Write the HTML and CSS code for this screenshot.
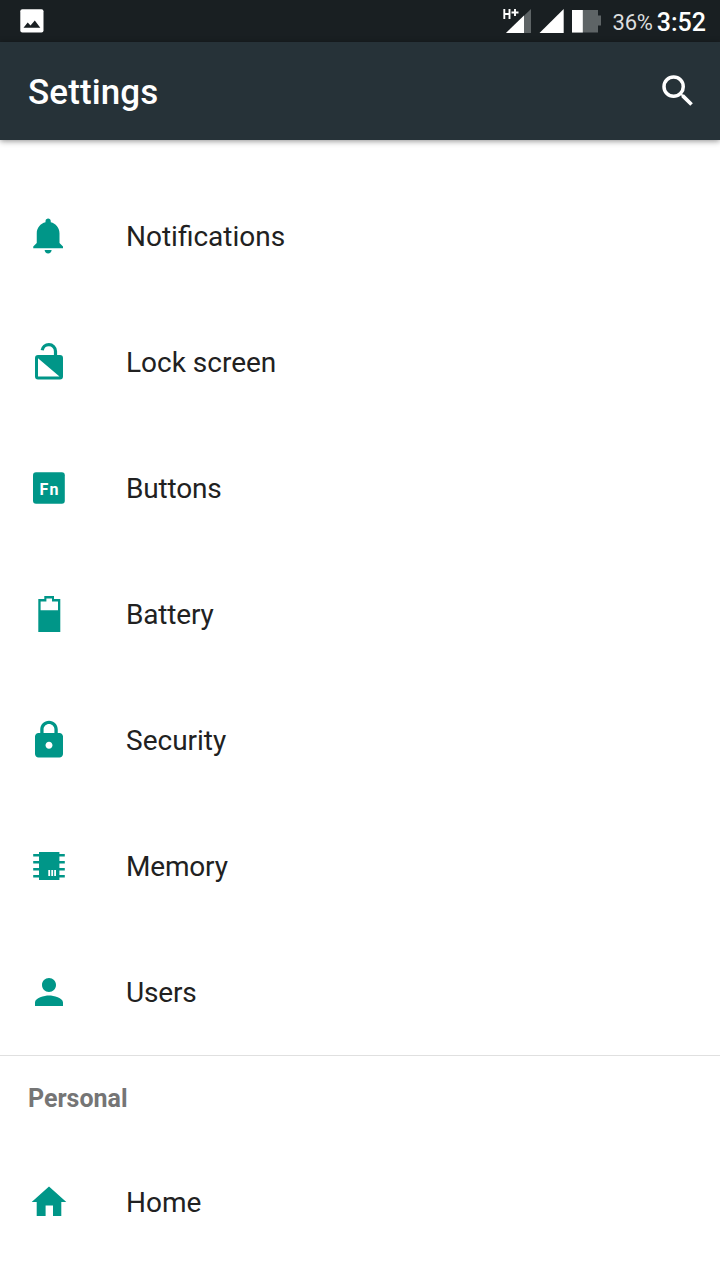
FILE: index.html
```html
<!DOCTYPE html>
<html lang="en">
<head>
<meta charset="utf-8">
<title>Settings</title>
<link rel="stylesheet" href="styles.css">
</head>
<body>
<div class="status-bar">
  <svg class="picture-icon" width="24" height="24" viewBox="0 0 24 24"><rect x=".3" y=".3" width="23.2" height="23.2" rx="2" fill="#fff"/><path d="M3.500 18.800 7.700 13.400l2.800 3.200 4.300-5.200 5.500 7.400z" fill="#191f22"/></svg>
  <div class="status-right">
    <svg class="signals" width="100" height="28" viewBox="0 0 100 28">
      <path d="M5 27 30 3v24z" fill="#5e6466"/>
      <path d="M5 27 23 9.500V27z" fill="#fff"/>
      <path d="M1 1h13v13H1z" fill="#191f22"/>
      <path d="M3.300 3v10M8.500 3v10M3.300 8h5.200M10.500 6.500h7M14 3v7" fill="none" stroke="#fff" stroke-width="1.900"/>
      <path d="M38.500 27 62.700 3v24z" fill="#fff"/>
      <path d="M71 4h26v5.500h3v10H97v7H71z" fill="#5e6466"/>
      <path d="M71 4h10.800v22.500H71z" fill="#fff"/>
    </svg>
    <span class="percent">36%</span>
    <span class="clock">3:52</span>
  </div>
</div>
<header class="app-bar">
  <h1 class="title">Settings</h1>
  <svg class="icon-search" width="42" height="42" viewBox="0 0 24 24"><path fill="#fff" d="M15.500 14h-.79l-.28-.27A6.470 6.470 0 0 0 16 9.500 6.500 6.500 0 1 0 9.500 16c1.610 0 3.090-.59 4.230-1.570l.27.28v.79l5 4.990L20.490 19l-4.990-5zm-6 0a4.500 4.500 0 1 1 0-9 4.500 4.500 0 0 1 0 9z"/></svg>
</header>
<main class="list">
  <div class="row">
    <svg class="icon" viewBox="0 0 24 24"><path d="M11.500 22c1.100 0 2-.9 2-2h-4c0 1.100.9 2 2 2zm6.500-6v-5.500c0-3.070-2.130-5.640-5-6.320V3.500c0-.83-.67-1.500-1.500-1.500S10 2.670 10 3.500v.68c-2.870.68-5 3.250-5 6.320V16l-2 2v1h17v-1l-2-2z"/></svg>
    <span class="label">Notifications</span>
  </div>
  <div class="row">
    <svg class="icon" viewBox="0 0 42 42"><path d="M14.200 9.300C14.700 6 17.400 3.700 20.900 3.700c3.700 0 6.600 2.800 6.600 6.500V15" fill="none" stroke="#009688" stroke-width="3.200"/><path fill-rule="evenodd" d="M10 14h22a3 3 0 0 1 3 3v18.500a3 3 0 0 1-3 3H10a3 3 0 0 1-3-3V17a3 3 0 0 1 3-3zM10 17.200V35.400H31.500z"/></svg>
    <span class="label">Lock screen</span>
  </div>
  <div class="row">
    <svg class="icon" viewBox="0 0 42 42"><rect x="5" y="5.200" width="31.800" height="31.600" rx="3"/><text class="fn" x="21" y="27.600" text-anchor="middle" textLength="19">Fn</text></svg>
    <span class="label label-tight">Buttons</span>
  </div>
  <div class="row">
    <svg class="icon" viewBox="0 0 42 42"><path fill-rule="evenodd" d="M10.300 6H16.300V3H26V6H32.300V39H10.300zM12.600 8.600V17.200H30V8.600H24V5.400H18.400V8.600z"/></svg>
    <span class="label label-tight">Battery</span>
  </div>
  <div class="row">
    <svg class="icon" viewBox="0 0 24 24"><path d="M18 8h-1V6c0-2.760-2.240-5-5-5S7 3.240 7 6v2H6c-1.100 0-2 .9-2 2v10c0 1.100.9 2 2 2h12c1.100 0 2-.9 2-2V10c0-1.100-.9-2-2-2zm-6 9c-1.100 0-2-.9-2-2s.9-2 2-2 2 .9 2 2-.9 2-2 2zm3.100-9H8.900V6c0-1.710 1.390-3.100 3.100-3.100s3.100 1.390 3.100 3.100v2z"/></svg>
    <span class="label">Security</span>
  </div>
  <div class="row">
    <svg class="icon" viewBox="0 0 42 42"><path d="M11 7h20.400v28H11zM5.200 9h31.600v2.400H5.200zM5.200 16h31.600v2.400H5.200zM5.200 23h31.600v2.400H5.200zM5.200 30h31.600v2.400H5.200z"/><path fill="#fff" d="M20.300 25h1.800v6h-1.800zM23.300 25h1.800v6h-1.800zM26.200 25h1.800v6h-1.800z"/></svg>
    <span class="label label-tight">Memory</span>
  </div>
  <div class="row">
    <svg class="icon" viewBox="0 0 24 24"><path d="M12 12c2.210 0 4-1.790 4-4s-1.790-4-4-4-4 1.790-4 4 1.790 4 4 4zm0 2c-2.670 0-8 1.340-8 4v2h16v-2c0-2.660-5.330-4-8-4z"/></svg>
    <span class="label label-tight">Users</span>
  </div>
  <h2 class="section">Personal</h2>
  <div class="row">
    <svg class="icon" viewBox="0 0 42 42"><path d="M21 5.500 38.300 21H33.300V35H25V24.500H17.600V35H8.700V21H3.700z"/></svg>
    <span class="label">Home</span>
  </div>
</main>
</body>
</html>
```
FILE: styles.css
```css
body {
  margin: 0;
  height: 1280px;
  overflow: hidden;
  background: #fff;
  color: #212121;
  font-family: Roboto, "Liberation Sans", sans-serif;
}

svg {
  display: block;
  flex: none;
}

.status-bar {
  display: flex;
  justify-content: space-between;
  box-sizing: border-box;
  height: 42px;
  padding: 0 14px 0 20px;
  background: #191f22;
  color: #fff;
}

.picture-icon {
  margin-top: 9px;
}

.status-right {
  display: flex;
  line-height: 46px;
}

.signals {
  margin: 6px 12px 0 0;
}

.percent {
  margin-right: 4px;
  font-size: 22px;
  letter-spacing: -0.2px;
  color: #dcdedf;
}

.clock {
  font-size: 25px;
  font-weight: 500;
}

.app-bar {
  display: flex;
  align-items: center;
  justify-content: space-between;
  box-sizing: border-box;
  height: 98px;
  padding: 0 21px 0 28px;
  background: #263238;
  box-shadow: 0 1px 6px rgba(0, 0, 0, 0.45);
}

.title {
  margin: 2px 0 0;
  font-size: 35px;
  font-weight: 500;
  letter-spacing: 0.1px;
  color: #fff;
}

.list {
  padding-top: 33px;
}

.row {
  display: flex;
  align-items: center;
  gap: 56px;
  height: 126px;
  padding-left: 28px;
}

.icon {
  width: 42px;
  height: 42px;
  fill: #009688;
}

.fn {
  fill: #fff;
  font-size: 16px;
  font-weight: 700;
}

.label {
  font-size: 28px;
}

.label-tight {
  letter-spacing: -0.18px;
}

.section {
  box-sizing: border-box;
  height: 84px;
  margin: 0;
  padding-left: 28px;
  border-top: 1px solid #e0e0e0;
  font-size: 25px;
  font-weight: 700;
  line-height: 85px;
  color: #757575;
}
```
